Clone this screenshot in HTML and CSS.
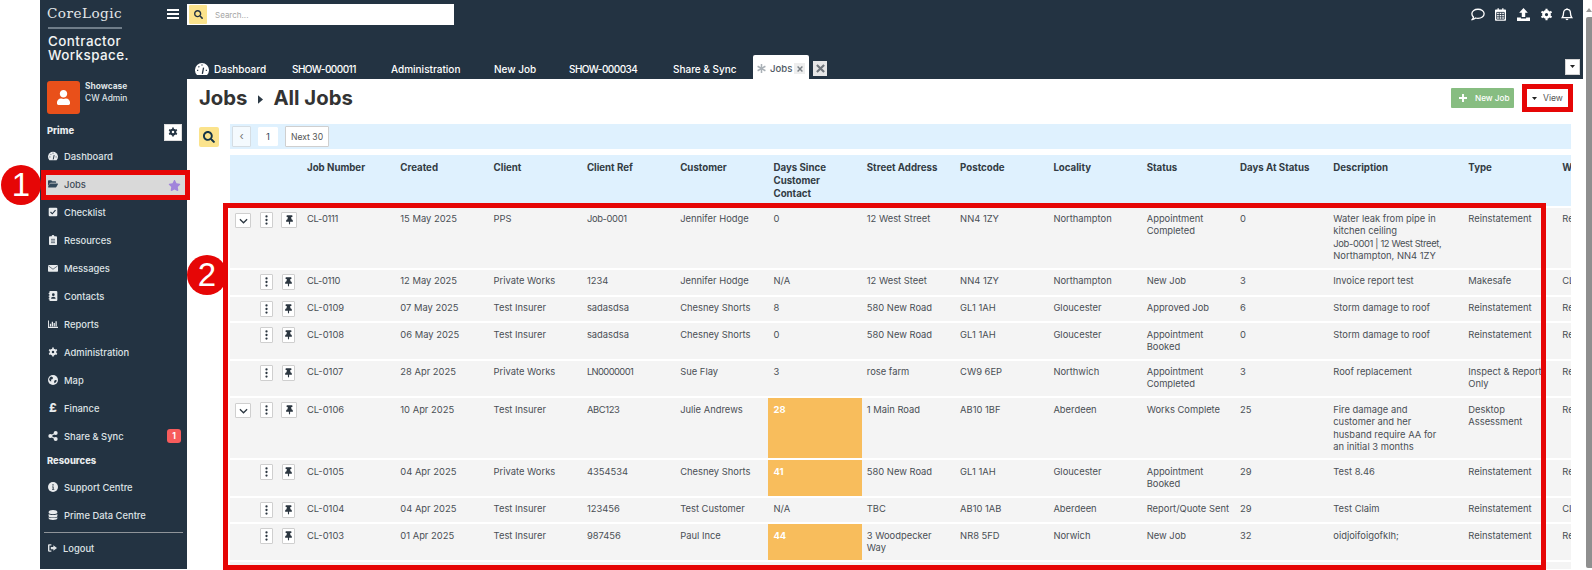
FILE: index.html
```html
<!DOCTYPE html>
<html lang="en">
<head>
<meta charset="utf-8">
<title>Jobs - Contractor Workspace</title>
<link rel="stylesheet" href="styles.css">
</head>
<body>
<svg class="defs" aria-hidden="true">
  <symbol id="i-search" viewBox="0 0 512 512"><path d="M505 442.7L405.3 343c-4.5-4.5-10.6-7-17-7H372c27.6-35.3 44-79.7 44-128C416 93.1 322.9 0 208 0S0 93.1 0 208s93.1 208 208 208c48.3 0 92.7-16.4 128-44v16.3c0 6.4 2.5 12.5 7 17l99.7 99.7c9.4 9.4 24.6 9.4 33.9 0l28.3-28.3c9.4-9.4 9.4-24.6.1-34zM208 336c-70.7 0-128-57.2-128-128 0-70.7 57.2-128 128-128 70.7 0 128 57.2 128 128 0 70.7-57.2 128-128 128z"/></symbol>
  <symbol id="i-pin" viewBox="0 0 384 512"><path d="M298.028 214.267L285.793 96H328c13.255 0 24-10.745 24-24V24c0-13.255-10.745-24-24-24H56C42.745 0 32 10.745 32 24v48c0 13.255 10.745 24 24 24h42.207L85.972 214.267C37.465 236.82 0 277.261 0 328c0 13.255 10.745 24 24 24h136v104.007c0 1.242.289 2.467.845 3.578l24 48c2.941 5.882 11.364 5.893 14.311 0l24-48a8.008 8.008 0 0 0 .845-3.578V352h136c13.255 0 24-10.745 24-24-.001-51.183-37.983-91.42-85.973-113.733z"/></symbol>
  <symbol id="i-star" viewBox="0 0 576 512"><path d="M259.3 17.8L194 150.2 47.9 171.5c-26.2 3.8-36.7 36.1-17.7 54.6l105.7 103-25 145.5c-4.5 26.3 23.2 46 46.4 33.7L288 439.6l130.7 68.7c23.2 12.2 50.9-7.4 46.4-33.7l-25-145.5 105.7-103c19-18.5 8.5-50.8-17.7-54.6L382 150.2 316.7 17.8c-11.7-23.6-45.6-23.9-57.4 0z"/></symbol>
  <symbol id="i-user" viewBox="0 0 448 512"><path d="M224 256c70.7 0 128-57.3 128-128S294.7 0 224 0 96 57.3 96 128s57.3 128 128 128zm89.6 32h-16.7c-22.2 10.2-46.9 16-72.9 16s-50.6-5.8-72.9-16h-16.7C60.2 288 0 348.2 0 422.4V464c0 26.5 21.5 48 48 48h352c26.5 0 48-21.5 48-48v-41.6c0-74.2-60.2-134.4-134.4-134.4z"/></symbol>
  <symbol id="i-cog" viewBox="0 0 16 16"><path fill-rule="evenodd" d="M8 2.600a5.400 5.400 0 1 0 0 10.800A5.400 5.400 0 0 0 8 2.600zm0 3.400a2 2 0 1 1 0 4 2 2 0 0 1 0-4z"/><path fill="none" stroke="currentColor" stroke-width="2.600" d="M8 .8v2.400M8 12.800v2.400M1.800 4.400l2 1.200M12.200 10.400l2 1.200M14.200 4.400l-2 1.200M3.800 10.400l-2 1.200"/></symbol>
  <symbol id="i-gauge" viewBox="0 0 16 16"><path d="M2 14.500a8 8 0 1 1 12 0c-.2.200-.5.300-.8.300H2.800c-.3 0-.6-.1-.8-.3z"/><path fill="none" stroke="#233342" stroke-width="1.500" d="M8.400 13.500L9.800 6.500M2.400 9.500h1.300M12.300 9.500h1.300M4 5l.9.9M8 2.800v1.300"/></symbol>
  <symbol id="i-folder" viewBox="0 0 16 14"><path d="M0 2.200C0 1.500.5 1 1.200 1h4l1.600 1.600h5c.7 0 1.200.5 1.200 1.200V5H4.400c-.8 0-1.500.4-1.900 1.100L0 10.400z"/><path d="M3.500 6.200H15.200c.6 0 1 .7.7 1.200l-2.500 4.400c-.2.400-.6.600-1 .6H.8c-.6 0-1-.7-.7-1.200l2.400-4.400c.2-.4.600-.6 1-.6z"/></symbol>
  <symbol id="i-check" viewBox="0 0 14 14"><rect x="1" y="1" width="12" height="12" rx="1.500"/><path fill="none" stroke="#233342" stroke-width="1.600" d="M3.500 7l2.500 2.500 4.500-5"/></symbol>
  <symbol id="i-clip" viewBox="0 0 12 15"><path d="M1.200 2H4a2 2 0 0 1 4 0h2.800c.7 0 1.200.5 1.200 1.200v10.600c0 .7-.5 1.200-1.200 1.200H1.200C.5 15 0 14.500 0 13.800V3.200C0 2.500.5 2 1.200 2z"/><path fill="none" stroke="#233342" d="M3 6.500h6M3 9h6M3 11.500h6"/></symbol>
  <symbol id="i-mail" viewBox="0 0 16 12"><rect y="1" width="16" height="11" rx="1.200"/><path fill="none" stroke="#233342" d="M.5 2.500L8 8l7.500-5.500"/></symbol>
  <symbol id="i-book" viewBox="0 0 13 15"><rect x="1" width="12" height="15" rx="1.500"/><circle cx="7" cy="5.500" r="2" fill="#233342"/><path fill="#233342" d="M3.500 11.500a3.500 3 0 0 1 7 0z"/><path d="M0 3h2v1.500H0zM0 7h2v1.500H0zM0 11h2v1.500H0z"/></symbol>
  <symbol id="i-chart" viewBox="0 0 16 13"><path d="M0 1h1.500v10H16v2H0z"/><path d="M3 6h2v4.500H3zM6 3h2v7.500H6zM9 5h2v5.500H9zM12 2h2v8.500h-2z"/></symbol>
  <symbol id="i-globe" viewBox="0 0 16 16"><circle cx="8" cy="8" r="8"/><path fill="#233342" d="M5 2.500l3 1.500-.5 2.500-3 1 1 2.500H3.500L1.800 7.500C2 5.500 3.300 3.500 5 2.500zM11 8l3 .5c-.3 2-1.500 3.500-3 4.500l-1.500-2z"/></symbol>
  <symbol id="i-share" viewBox="0 0 14 15"><circle cx="3" cy="7.500" r="3"/><circle cx="11" cy="3" r="3"/><circle cx="11" cy="12" r="3"/><path fill="none" stroke="currentColor" stroke-width="1.600" d="M11 3L3 7.500l8 4.500"/></symbol>
  <symbol id="i-info" viewBox="0 0 16 16"><circle cx="8" cy="8" r="8"/><path fill="#233342" d="M7 3.500h2v2H7zM6.500 7H9v4.200h1V12.500H6.500v-1.300h1V8.300h-1z"/></symbol>
  <symbol id="i-db" viewBox="0 0 14 16"><path d="M0 3c0-1.700 3-3 7-3s7 1.300 7 3v1c0 1.500-3 2.600-7 2.600S0 5.500 0 4zM0 6.200c1.500 1 4 1.600 7 1.600s5.500-.6 7-1.600V9.500C14 11 11 12 7 12S0 11 0 9.500zM0 11.400c1.500 1 4 1.500 7 1.500s5.500-.5 7-1.500v1.800c0 1.600-3 2.800-7 2.800s-7-1.200-7-2.800z"/></symbol>
  <symbol id="i-out" viewBox="0 0 16 13"><path d="M1.500 0H6v2H2.500v9H6v2H1.500C.7 13 0 12.300 0 11.500v-10C0 .7.700 0 1.500 0z"/><path d="M9.500 1.500L16 6.500l-6.500 5V8.500H5v-4h4.500z"/></symbol>
  <symbol id="i-kebab" viewBox="0 0 4 14"><circle cx="2" cy="2" r="1.600"/><circle cx="2" cy="7" r="1.600"/><circle cx="2" cy="12" r="1.600"/></symbol>
  <symbol id="i-comment" viewBox="0 0 16 14"><path fill="none" stroke="currentColor" stroke-width="1.500" d="M8 1c3.900 0 7 2.300 7 5.200s-3.100 5.200-7 5.200c-1 0-2-.1-2.800-.4-.9.800-2.200 1.500-3.700 1.700.7-.8 1.200-1.700 1.300-2.700C1.700 9.100 1 7.700 1 6.200 1 3.300 4.100 1 8 1z"/></symbol>
  <symbol id="i-cal" viewBox="0 0 13 15"><path d="M1.200 1.500H3V0h1.500v1.500h4V0H10v1.500h1.800c.7 0 1.200.5 1.200 1.200v11c0 .7-.5 1.300-1.200 1.300H1.200C.5 15 0 14.400 0 13.700v-11c0-.7.5-1.200 1.200-1.200z"/><path fill="none" stroke="#233342" d="M2 5h9v8H2zM2 7.500h9M2 10.200h9M5 5v8M8 5v8"/></symbol>
  <symbol id="i-upload" viewBox="0 0 15 15"><path d="M7.500 0l5 5.500H9.500v5h-4v-5H2.500z"/><path d="M0 11h4.500v1h6v-1H15v4H0z"/></symbol>
  <symbol id="i-bell" viewBox="0 0 13 15"><path fill="none" stroke="currentColor" stroke-width="1.500" d="M6.500 1.500c2.500 0 4 2 4 4.300 0 3 .6 4 1.500 5.200H1c.9-1.200 1.500-2.200 1.500-5.200 0-2.300 1.500-4.300 4-4.300z"/><path d="M6 0h1v1.500H6zM4.800 12.300h3.400a1.700 1.700 0 0 1-3.400 0z"/></symbol>
  <symbol id="i-caret" viewBox="0 0 10 6"><path d="M0 0h10L5 6z"/></symbol>
  <symbol id="i-times" viewBox="0 0 10 10"><path fill="none" stroke="currentColor" stroke-width="2.400" d="M1 1l8 8M9 1l-8 8"/></symbol>
  <symbol id="i-plus" viewBox="0 0 10 10"><path fill="none" stroke="currentColor" stroke-width="2.400" d="M5 0v10M0 5h10"/></symbol>
  <symbol id="i-ast" viewBox="0 0 12 12"><path fill="none" stroke="currentColor" stroke-width="2" d="M6 0v12M.8 3l10.400 6M11.200 3L.8 9"/></symbol>
</svg>

<div class="app">
  <aside class="sidebar">
    <div class="logo-row">
      <span class="corelogic">CoreLogic</span>
      <button class="burger" aria-label="Menu"><span></span><span></span><span></span></button>
    </div>
    <div class="logo-rule"></div>
    <div class="product">Contractor<br>Workspace.</div>
    <div class="user">
      <div class="avatar"><svg class="ic-user"><use href="#i-user"/></svg></div>
      <div class="user-text"><strong>Showcase</strong><span>CW Admin</span></div>
    </div>
    <div class="section-row">
      <span class="section-title section-prime">Prime</span>
      <button class="gear-box" aria-label="Settings"><svg class="ic-gear"><use href="#i-cog"/></svg></button>
    </div>
    <ul class="nav">
      <li><a><svg class="ic"><use href="#i-gauge"/></svg>Dashboard</a></li>
      <li><a class="active"><svg class="ic"><use href="#i-folder"/></svg>Jobs<svg class="ic-star"><use href="#i-star"/></svg></a></li>
      <li><a><svg class="ic"><use href="#i-check"/></svg>Checklist</a></li>
      <li><a><svg class="ic"><use href="#i-clip"/></svg>Resources</a></li>
      <li><a><svg class="ic"><use href="#i-mail"/></svg>Messages</a></li>
      <li><a><svg class="ic"><use href="#i-book"/></svg>Contacts</a></li>
      <li><a><svg class="ic"><use href="#i-chart"/></svg>Reports</a></li>
      <li><a><svg class="ic"><use href="#i-cog"/></svg>Administration</a></li>
      <li><a><svg class="ic"><use href="#i-globe"/></svg>Map</a></li>
      <li><a><span class="ic pound">£</span>Finance</a></li>
      <li><a><svg class="ic"><use href="#i-share"/></svg>Share &amp; Sync<span class="badge">1</span></a></li>
    </ul>
    <div class="section-title res-title">Resources</div>
    <ul class="nav">
      <li><a><svg class="ic"><use href="#i-info"/></svg>Support Centre</a></li>
      <li><a><svg class="ic"><use href="#i-db"/></svg>Prime Data Centre</a></li>
    </ul>
    <div class="side-rule"></div>
    <a class="logout"><svg class="ic-out"><use href="#i-out"/></svg>Logout</a>
  </aside>

  <main class="main">
    <header class="topbar">
      <div class="top-row">
        <div class="searchbox">
          <button class="search-btn" aria-label="Search"><svg class="ic-search-s"><use href="#i-search"/></svg></button>
          <span class="placeholder">Search...</span>
        </div>
        <div class="top-icons">
          <svg class="ti ti-comment"><use href="#i-comment"/></svg>
          <svg class="ti ti-cal"><use href="#i-cal"/></svg>
          <svg class="ti ti-upload"><use href="#i-upload"/></svg>
          <svg class="ti ti-cog"><use href="#i-cog"/></svg>
          <svg class="ti ti-bell"><use href="#i-bell"/></svg>
        </div>
      </div>
      <div class="tabs">
        <a class="tab"><svg class="ic-tabdash"><use href="#i-gauge"/></svg>Dashboard</a>
        <a class="tab tab-id">SHOW-000011</a>
        <a class="tab">Administration</a>
        <a class="tab">New Job</a>
        <a class="tab tab-id">SHOW-000034</a>
        <a class="tab">Share &amp; Sync</a>
        <a class="tab tab-active"><svg class="ic-ast"><use href="#i-ast"/></svg>Jobs<span class="tab-x"><svg class="ic-x"><use href="#i-times"/></svg></span></a>
        <button class="close-all" aria-label="Close all"><svg class="ic-xl"><use href="#i-times"/></svg></button>
        <button class="tab-more" aria-label="More tabs"><svg class="ic-caret"><use href="#i-caret"/></svg></button>
      </div>
    </header>

    <section class="content">
      <div class="title-row">
        <h1>Jobs<svg class="crumb"><use href="#i-caret"/></svg>All Jobs</h1>
        <div class="actions">
          <button class="btn-new"><svg class="ic-plus"><use href="#i-plus"/></svg>New Job</button>
          <button class="btn-view"><svg class="ic-caret-v"><use href="#i-caret"/></svg>View</button>
        </div>
      </div>
      <div class="tool-row">
        <button class="find" aria-label="Search jobs"><svg class="ic-find"><use href="#i-search"/></svg></button>
        <div class="pager">
          <button class="pg pg-prev">&lsaquo;</button>
          <button class="pg pg-num">1</button>
          <button class="pg pg-next">Next 30</button>
        </div>
      </div>
      <div class="table-wrap">
        <table class="jobs">
          <colgroup>
            <col class="c-act"><col class="c-std"><col class="c-std"><col class="c-std"><col class="c-std"><col class="c-std"><col class="c-std"><col class="c-std"><col class="c-std"><col class="c-std"><col class="c-std"><col class="c-std"><col class="c-desc"><col class="c-type"><col class="c-w">
          </colgroup>
          <thead>
            <tr>
              <th></th><th>Job Number</th><th>Created</th><th>Client</th><th>Client Ref</th><th>Customer</th><th>Days Since<br>Customer<br>Contact</th><th>Street Address</th><th>Postcode</th><th>Locality</th><th>Status</th><th>Days At Status</th><th>Description</th><th>Type</th><th>W</th>
            </tr>
          </thead>
          <tbody>
            <tr class="h60">
              <td><div class="acts"><button class="b b-chev"><svg class="ic-chev" viewBox="0 0 10 6"><path d="M1 1l4 4 4-4"/></svg></button><button class="b"><svg class="ic-kebab"><use href="#i-kebab"/></svg></button><button class="b"><svg class="ic-pin"><use href="#i-pin"/></svg></button></div></td>
              <td class="tight">CL-0111</td><td>15 May 2025</td><td>PPS</td><td class="tight">Job-0001</td><td>Jennifer Hodge</td><td>0</td><td>12 West Street</td><td>NN4 1ZY</td><td>Northampton</td><td>Appointment<br>Completed</td><td>0</td><td>Water leak from pipe in<br>kitchen ceiling<br><span class="tight">Job-0001 | 12 West Street,</span><br>Northampton, NN4 1ZY</td><td>Reinstatement</td><td>Re</td>
            </tr>
            <tr class="h25">
              <td><div class="acts"><button class="b b-slot2"><svg class="ic-kebab"><use href="#i-kebab"/></svg></button><button class="b"><svg class="ic-pin"><use href="#i-pin"/></svg></button></div></td>
              <td class="tight">CL-0110</td><td>12 May 2025</td><td>Private Works</td><td>1234</td><td>Jennifer Hodge</td><td>N/A</td><td>12 West Steet</td><td>NN4 1ZY</td><td>Northampton</td><td>New Job</td><td>3</td><td>Invoice report test</td><td>Makesafe</td><td>CL</td>
            </tr>
            <tr class="h24">
              <td><div class="acts"><button class="b b-slot2"><svg class="ic-kebab"><use href="#i-kebab"/></svg></button><button class="b"><svg class="ic-pin"><use href="#i-pin"/></svg></button></div></td>
              <td>CL-0109</td><td>07 May 2025</td><td>Test Insurer</td><td>sadasdsa</td><td>Chesney Shorts</td><td>8</td><td>580 New Road</td><td>GL1 1AH</td><td>Gloucester</td><td>Approved Job</td><td>6</td><td>Storm damage to roof</td><td>Reinstatement</td><td>Re</td>
            </tr>
            <tr class="h36">
              <td><div class="acts"><button class="b b-slot2"><svg class="ic-kebab"><use href="#i-kebab"/></svg></button><button class="b"><svg class="ic-pin"><use href="#i-pin"/></svg></button></div></td>
              <td>CL-0108</td><td>06 May 2025</td><td>Test Insurer</td><td>sadasdsa</td><td>Chesney Shorts</td><td>0</td><td>580 New Road</td><td>GL1 1AH</td><td>Gloucester</td><td>Appointment<br>Booked</td><td>0</td><td>Storm damage to roof</td><td>Reinstatement</td><td>Re</td>
            </tr>
            <tr class="h35">
              <td><div class="acts"><button class="b b-slot2"><svg class="ic-kebab"><use href="#i-kebab"/></svg></button><button class="b"><svg class="ic-pin"><use href="#i-pin"/></svg></button></div></td>
              <td>CL-0107</td><td>28 Apr 2025</td><td>Private Works</td><td class="tighter">LN0000001</td><td>Sue Flay</td><td>3</td><td>rose farm</td><td>CW9 6EP</td><td>Northwich</td><td>Appointment<br>Completed</td><td>3</td><td>Roof replacement</td><td>Inspect &amp; Report<br>Only</td><td>Re</td>
            </tr>
            <tr class="h60 lower">
              <td><div class="acts"><button class="b b-chev"><svg class="ic-chev" viewBox="0 0 10 6"><path d="M1 1l4 4 4-4"/></svg></button><button class="b"><svg class="ic-kebab"><use href="#i-kebab"/></svg></button><button class="b"><svg class="ic-pin"><use href="#i-pin"/></svg></button></div></td>
              <td>CL-0106</td><td>10 Apr 2025</td><td>Test Insurer</td><td class="tight">ABC123</td><td>Julie Andrews</td><td class="late">28</td><td>1 Main Road</td><td>AB10 1BF</td><td>Aberdeen</td><td>Works Complete</td><td>25</td><td>Fire damage and<br>customer and her<br>husband require AA for<br>an initial 3 months</td><td>Desktop<br>Assessment</td><td>Re</td>
            </tr>
            <tr class="h36">
              <td><div class="acts"><button class="b b-slot2"><svg class="ic-kebab"><use href="#i-kebab"/></svg></button><button class="b"><svg class="ic-pin"><use href="#i-pin"/></svg></button></div></td>
              <td>CL-0105</td><td>04 Apr 2025</td><td>Private Works</td><td>4354534</td><td>Chesney Shorts</td><td class="late">41</td><td>580 New Road</td><td>GL1 1AH</td><td>Gloucester</td><td>Appointment<br>Booked</td><td>29</td><td>Test 8.46</td><td>Reinstatement</td><td>Re</td>
            </tr>
            <tr class="h24">
              <td><div class="acts"><button class="b b-slot2"><svg class="ic-kebab"><use href="#i-kebab"/></svg></button><button class="b"><svg class="ic-pin"><use href="#i-pin"/></svg></button></div></td>
              <td>CL-0104</td><td>04 Apr 2025</td><td>Test Insurer</td><td>123456</td><td>Test Customer</td><td>N/A</td><td>TBC</td><td>AB10 1AB</td><td>Aberdeen</td><td>Report/Quote Sent</td><td>29</td><td>Test Claim</td><td>Reinstatement</td><td>CL</td>
            </tr>
            <tr class="h36">
              <td><div class="acts"><button class="b b-slot2"><svg class="ic-kebab"><use href="#i-kebab"/></svg></button><button class="b"><svg class="ic-pin"><use href="#i-pin"/></svg></button></div></td>
              <td>CL-0103</td><td>01 Apr 2025</td><td>Test Insurer</td><td>987456</td><td>Paul Ince</td><td class="late">44</td><td>3 Woodpecker<br>Way</td><td>NR8 5FD</td><td>Norwich</td><td>New Job</td><td>32</td><td>oidjoifoigofklh;</td><td>Reinstatement</td><td>Re</td>
            </tr>
            <tr class="h36">
              <td></td><td></td><td></td><td></td><td></td><td></td><td></td><td></td><td></td><td></td><td></td><td></td><td></td><td></td><td></td>
            </tr>
          </tbody>
        </table>
      </div>
    </section>
  </main>

  <div class="scrollbar"><span class="sb-arrow"></span><span class="sb-thumb"></span></div>
</div>

<div class="mark mark-jobs"></div>
<div class="mark mark-table"></div>
<div class="num num-1">1</div>
<div class="num num-2">2</div>
</body>
</html>
```

FILE: styles.css
```css
* { box-sizing: border-box; }
html, body { margin: 0; padding: 0; height: 570px; overflow: hidden; background: #fff; }
body { font-family: Inter, "Noto Sans", sans-serif; font-size: 9.4px; color: #4a4f55; position: relative; }
button { font: inherit; padding: 0; cursor: pointer; }
ul { list-style: none; margin: 0; padding: 0; }
svg { display: block; fill: currentColor; }
.defs { position: absolute; width: 0; height: 0; overflow: hidden; }

.app { display: flex; height: 569px; margin-left: 40px; }

/* Sidebar */
.sidebar { width: 147px; flex: none; background: #233342; color: #dfe3e6; padding-top: 5px; display: flex; flex-direction: column; }
.logo-row { display: flex; justify-content: space-between; align-items: center; height: 16px; padding: 0 8px 0 7px; }
.corelogic { font-family: "DejaVu Serif", "Liberation Serif", serif; font-size: 13.6px; font-weight: 400; letter-spacing: .45px; color: #e4e7e9; }
.burger { width: 12px; height: 10px; margin-top: 2px; border: 0; background: none; display: flex; flex-direction: column; justify-content: space-between; }
.burger span { display: block; height: 2px; background: #fff; }
.logo-rule { width: 74px; height: 2px; margin: 6px 0 0 8px; background: #6f7d89; }
.product { margin: 5px 0 0 8px; font-size: 13.4px; line-height: 14px; font-weight: 500; letter-spacing: .45px; color: #f2f3f4; }
.user { display: flex; margin: 19px 0 8px 7px; gap: 5px; height: 33px; }
.avatar { width: 33px; height: 33px; background: #e9501a; border-radius: 3px; display: flex; align-items: center; justify-content: center; color: #fff; }
.ic-user { width: 13px; height: 15px; }
.user-text { display: flex; flex-direction: column; font-size: 8.4px; line-height: 12px; margin-top: -1px; color: #dfe3e6; font-weight: 500; }
.user-text strong { font-weight: 700; }
.section-row { display: flex; justify-content: space-between; align-items: center; height: 20px; padding: 0 5px 0 7px; }
.section-title { font-size: 9.4px; font-weight: 800; color: #e9ecee; }
.section-prime { margin-top: -3px; }
.res-title { height: 23px; line-height: 22px; padding-left: 7px; }
.gear-box { width: 18px; height: 17px; background: #fff; border: 1px solid #ddd; color: #233342; display: flex; align-items: center; justify-content: center; }
.ic-gear { width: 10px; height: 10px; }
.nav li { height: 28px; padding: 4px 2px 4px 6px; }
.nav a { display: flex; align-items: center; height: 20px; gap: 4px; font-size: 9.4px; font-weight: 500; }
.nav a.active { background: #d9d9d9; color: #3e4b57; margin-top: 1px; padding-bottom: 2px; }
.ic { width: 10px; height: 10px; margin-left: 2px; flex: none; margin-right: 2px; color: #e8ebed; }
.active .ic { color: #33485a; }
.pound { font-size: 12px; font-weight: 800; line-height: 10px; display: block; text-align: center; }
.ic-star { width: 13px; height: 11px; margin-left: auto; margin-right: 4px; margin-top: 2px; color: #a184db; }
.badge { margin-left: auto; margin-right: 4px; width: 14px; height: 14px; border-radius: 3px; background: #f75c5c; color: #fff; font-size: 8.5px; font-weight: 700; line-height: 14px; text-align: center; }
.side-rule { height: 1px; margin: 3px 4px 0 4px; background: #8f9499; }
.logout { display: flex; align-items: center; gap: 6px; height: 20px; margin: 5px 0 0 8px; font-size: 9.4px; font-weight: 500; }
.ic-out { width: 9px; height: 8px; }

/* Main */
.main { width: 1396px; flex: none; display: flex; flex-direction: column; min-width: 0; }
.topbar { height: 79px; flex: none; background: #233342; color: #fff; display: flex; flex-direction: column; }
.top-row { display: flex; justify-content: space-between; height: 55px; padding-top: 4px; }
.searchbox { width: 267px; height: 21px; background: #fff; display: flex; align-items: center; padding-left: 2px; }
.search-btn { width: 18px; height: 19px; border: 0; border-radius: 1px; background: #fbe38c; color: #233342; display: flex; align-items: center; justify-content: center; }
.ic-search-s { width: 9px; height: 9px; }
.placeholder { margin-left: 8px; font-size: 8px; color: #a5a5a5; }
.top-icons { display: grid; grid-template-columns: 24px 22px 23px 21px 22px; width: 112px; padding-top: 4px; align-items: start; }
.ti { height: 13px; }
.ti-comment { width: 14px; }
.ti-cal { width: 11px; }
.ti-upload { width: 13px; }
.ti-cog { width: 13px; }
.ti-bell { width: 12px; }

.tabs { display: grid; grid-template-columns: 8px 97px 99px 103px 75px 104px 80px 60px 14px 738px 15px; height: 24px; align-items: center; font-size: 10px; font-weight: 500; }
.tabs::before { content: ""; }
.tab { display: flex; align-items: center; height: 24px; color: #fff; white-space: nowrap; padding-top: 3px; }
.tab-id { letter-spacing: -.55px; }
.ic-tabdash { width: 14px; height: 14px; margin-right: 5px; }
.tab-active { width: 56px; background: #fff; color: #4f5a64; border-radius: 2px 2px 0 0; padding-left: 4px; font-size: 9.6px; }
.ic-ast { width: 9px; height: 9px; margin-right: 4px; color: #a9b0b6; }
.tab-x { width: 11px; height: 11px; margin-left: 2px; background: #eeeeee; color: #7b8288; display: flex; align-items: center; justify-content: center; }
.ic-x { width: 6px; height: 6px; }
.close-all { width: 14px; height: 15px; margin-top: 2px; border: 0; background: #e6e6e6; color: #6f757b; display: flex; align-items: center; justify-content: center; }
.ic-xl { width: 9px; height: 9px; }
.tab-more { grid-column: 11; width: 15px; height: 16px; margin-top: -1px; border: 1px solid #d5d5d5; background: #fff; color: #222; display: flex; align-items: center; justify-content: center; }
.ic-caret { width: 5px; height: 3px; }

/* Content */
.content { flex: 1; background: #fff; padding-right: 12px; overflow: hidden; }
.title-row { display: flex; justify-content: space-between; align-items: flex-start; height: 45px; padding: 0 0 0 12px; }
h1 { margin: 6px 0 0; display: flex; align-items: center; font-size: 20.3px; line-height: 26px; font-weight: 700; color: #333; }
.crumb { width: 9px; height: 5px; margin: 2px 8px 0 9px; transform: rotate(-90deg); color: #2c3a46; }
.actions { display: flex; margin: 5px -2px 0 0; }
.btn-new { width: 63px; height: 20px; margin-top: 4px; border: 0; border-radius: 1px; background: #87bd81; color: #fff; display: flex; align-items: center; font-size: 8.2px; font-weight: 500; padding-left: 8px; }
.ic-plus { width: 8px; height: 8px; margin-right: 8px; }
.btn-view { width: 51px; height: 28px; margin-left: 8px; border: 5px solid #e60606; background: #fff; color: #555; display: flex; align-items: center; font-size: 8.6px; padding-left: 5px; }
.ic-caret-v { width: 5px; height: 3px; margin-right: 6px; color: #222; }

.tool-row { display: flex; }
.find { width: 20px; height: 20px; margin: 3px 11px 0 12px; border: 0; border-radius: 2px; background: #fbe38c; color: #143548; display: flex; align-items: center; justify-content: center; }
.ic-find { width: 12px; height: 12px; }
.pager { flex: 1; height: 25px; background: #dff1fe; display: flex; align-items: center; padding-left: 2px; }
.pg { height: 21px; background: #fff; border: 1px solid #cfcfcf; border-radius: 1px; color: #555; font-size: 8.6px; }
.pg-prev { width: 19px; background: #f4fafe; border-color: #d5dde3; color: #777; font-size: 11px; line-height: 15px; }
.pg-num { width: 20px; height: 19px; margin-left: 7px; border-color: #fff; font-size: 9.5px; color: #33485a; }
.pg-next { width: 44px; margin-left: 7px; }

.table-wrap { width: 1341px; margin: 4px 0 0 43px; overflow: hidden; height: 420px; }
.jobs { table-layout: fixed; width: 1427px; border-collapse: separate; border-spacing: 0 2px; }
.c-act { width: 72px; }
.c-std { width: 93.3px; }
.c-desc { width: 135px; }
.c-type { width: 94px; }
.c-w { width: 100px; }
.jobs th { height: 51px; padding: 6px 5px 0; background: #dff1fe; color: #333c44; font-size: 9.7px; line-height: 13px; font-weight: 700; text-align: left; vertical-align: top; white-space: nowrap; overflow: hidden; }
.jobs td { background: #f4f4f4; padding: 5px 5px 0; vertical-align: top; line-height: 12.35px; font-size: 9.4px; white-space: nowrap; overflow: hidden; }
.h60 td { height: 60px; }
.jobs .h36 td, .jobs .lower td { padding-top: 6px; }
.h36 td { height: 36px; }
.h35 td { height: 35px; }
.h25 td { height: 25px; }
.h24 td { height: 24px; }
.jobs td.late { background: #f8bd5c; color: #fff; font-weight: 700; }
.jobs .tight, .tight { letter-spacing: -.35px; }
.jobs .tighter { letter-spacing: -.6px; }
.jobs tr td:first-child { padding: 4px 0 0 5px; }
.acts { display: flex; align-items: flex-start; }
.b { width: 16px; height: 16px; margin-left: 8px; border: 1px solid #cfcfcf; border-radius: 1px; background: #fff; color: #2b3640; display: flex; align-items: center; justify-content: center; }
.b:first-child { margin-left: 0; }
.b:nth-child(2) { width: 13px; margin-left: 9px; }
.b-chev { height: 15px; margin-top: 1px; }
.b-slot2:first-child { width: 13px; margin-left: 25px; }
.ic-chev { width: 9px; height: 6px; fill: none; stroke: #2b3640; stroke-width: 1.4; }
.ic-kebab { width: 3px; height: 10px; }
.ic-pin { width: 7px; height: 10px; }

/* Scrollbar */
.scrollbar { width: 6px; margin-left: 3px; display: flex; flex-direction: column; align-items: center; flex: none; }
.sb-arrow { width: 0; height: 0; margin-top: 8px; border: 3px solid transparent; border-bottom: 4px solid #9a9a9a; border-top: 0; }
.sb-thumb { width: 6px; height: 551px; margin-top: 5px; background: #8f8f8f; border-radius: 2px 0 0 2px; }

/* Annotations over the screenshot */
.mark { position: absolute; border: 5px solid #e60606; pointer-events: none; }
.mark-jobs { left: 41px; top: 170px; width: 149px; height: 30px; }
.mark-table { left: 223px; top: 203px; width: 1323px; height: 367px; }
.num { position: absolute; width: 40px; height: 40px; border-radius: 50%; background: #e60606; color: #fff; font-family: "Liberation Sans", Arial, sans-serif; font-size: 33px; line-height: 40px; text-align: center; }
.num-1 { left: 1px; top: 165px; }
.num-2 { left: 187px; top: 255px; }
```
